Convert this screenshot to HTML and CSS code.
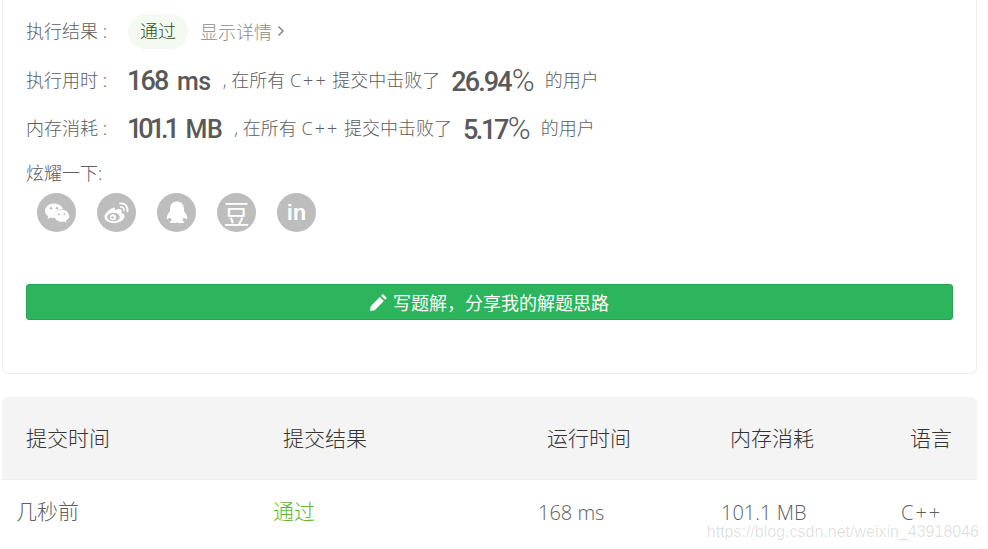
FILE: index.html

```html
<!DOCTYPE html>
<html lang="zh-CN">
<head>
  <meta charset="UTF-8" />
  <meta name="viewport" content="width=device-width, initial-scale=1.0" />
  <title>提交记录</title>
  <link rel="stylesheet" href="styles.css">
</head>
<body>
  <div class="karte">
    <div class="zeile">
      <span class="label">执行结果 :</span>
      <span class="pill">通过</span>
      <a class="details">显示详情
        <svg width="8" height="12" viewBox="0 0 8 12"><polyline points="1.500,1.500 6,6 1.500,10.500" fill="none" stroke="#8c8c8c" stroke-width="1.600"/></svg>
      </a>
    </div>
    <div class="zeile">
      <span class="label">执行用时 :</span>
      <span class="zahl zahl-a"><span class="ziffern">168</span> <span class="einheit">ms</span></span>
      <span class="text">, 在所有 <span class="cpp">C++</span> 提交中击败了</span>
      <span class="zahl prozent"><span class="ziffern">26.94</span><i>%</i></span>
      <span class="text">的用户</span>
    </div>
    <div class="zeile">
      <span class="label">内存消耗 :</span>
      <span class="zahl zahl-a"><span class="ziffern enger">101.1</span> <span class="einheit">MB</span></span>
      <span class="text">, 在所有 <span class="cpp">C++</span> 提交中击败了</span>
      <span class="zahl prozent"><span class="ziffern eng">5.17</span><i>%</i></span>
      <span class="text">的用户</span>
    </div>
    <div class="teilen">炫耀一下:</div>
    <div class="icons">
      <a class="icon">
        <svg width="26" height="24" viewBox="0 0 26 24">
          <path fill="#fff" d="M10 2.500C4.900 2.500 1 5.700 1 9.700c0 2.300 1.300 4.200 3.400 5.600l-.9 2.700 3.100-1.600c1.100.3 2.200.5 3.400.5h.8a6.400 6.400 0 0 1-.3-1.900c0-3.900 3.500-7 7.900-7h.7C17.900 4.800 14.300 2.500 10 2.500z"/>
          <circle cx="7" cy="7.300" r="1.200" fill="#bdbdbd"/><circle cx="13" cy="7.300" r="1.200" fill="#bdbdbd"/>
          <path fill="#fff" d="M25 14.800c0-3.300-3.200-6-7.300-6s-7.300 2.700-7.300 6 3.200 6 7.300 6c.9 0 1.700-.1 2.500-.4l2.400 1.300-.7-2.200c2.200-1.100 3.600-2.800 3.600-4.700z"/>
          <circle cx="15" cy="13.300" r="1" fill="#bdbdbd"/><circle cx="20.300" cy="13.300" r="1" fill="#bdbdbd"/>
        </svg>
      </a>
      <a class="icon">
        <svg width="28" height="24" viewBox="0 0 28 24">
          <path fill="#fff" d="M11.500 6.500C7 7.500 1.500 12 1.500 16c0 3.500 4.500 6 9 6 6 0 11-3.300 11-6.800 0-2-1.800-3-3.300-3.400.6-1.500.5-2.800-.4-3.400-1.300-.8-3.700-.2-5.800.9 0-1.500-.3-2.800-.5-2.800z"/>
          <ellipse cx="10.500" cy="16" rx="6.300" ry="4.300" fill="#bdbdbd"/>
          <circle cx="10" cy="16.200" r="3" fill="#fff"/><circle cx="9.500" cy="16.500" r="1.300" fill="#bdbdbd"/>
          <path fill="none" stroke="#fff" stroke-width="1.700" stroke-linecap="round" d="M17 2.500c4.500-.8 8.300 3 7.500 8"/>
          <path fill="none" stroke="#fff" stroke-width="1.500" stroke-linecap="round" d="M17.500 6c2.200-.3 3.800 1.300 3.500 3.600"/>
        </svg>
      </a>
      <a class="icon">
        <svg width="26" height="26" viewBox="-1 0 26 26">
          <path fill="#fff" d="M12 1.500c-4.500 0-7 3.300-7 7.300v2.500c-1.700 2-3.300 4.700-3.300 6.700 0 1.200.6 1.500 1.300 1.100l2.200-1.500c.3 1.100 1 2.100 1.800 2.800-1.300.4-2.400 1-2.400 1.600 0 .8 1.700 1.100 3.900 1.100 1.500 0 2.800-.3 3.500-.9.700.6 2 .9 3.500.9 2.200 0 3.900-.3 3.900-1.100 0-.6-1.100-1.200-2.400-1.600.8-.7 1.500-1.700 1.800-2.800l2.200 1.500c.7.4 1.300.1 1.300-1.100 0-2-1.600-4.700-3.300-6.700V8.800c0-4-2.500-7.300-7-7.300z"/>
        </svg>
      </a>
      <a class="icon glyph-dou">豆</a>
      <a class="icon glyph-in">in</a>
    </div>
    <button class="btn">
      <svg width="17" height="17" viewBox="0.900 1.200 14 14"><path fill="#fff" d="M11.500 1.200l3.300 3.300-1.500 1.500L10 2.700zM9 3.700L12.300 7l-7.500 7.500L.9 15.200l.6-4z"/></svg>
      写题解，分享我的解题思路
    </button>
  </div>

  <div class="tabelle">
    <div class="reihe kopf">
      <span>提交时间</span>
      <span>提交结果</span>
      <span>运行时间</span>
      <span>内存消耗</span>
      <span>语言</span>
    </div>
    <div class="reihe">
      <span>几秒前</span>
      <span class="gruen">通过</span>
      <span class="latein">168 ms</span>
      <span class="latein">101.1 MB</span>
      <span class="latein cpp">C++</span>
    </div>
  </div>

  <div class="wasserzeichen">https://blog.csdn.net/weixin_43918046</div>
</body>
</html>
```

FILE: styles.css

```css
html, body { height: 100%; overflow: hidden; }
body {
  font-family: "Open Sans", "Noto Sans CJK SC", sans-serif;
  font-weight: 300;
  background: white;
  color: #5e5e5e;
  margin: 0;
  padding: 0 11px 0 2px;
  position: relative;
}
.karte {
  background: white;
  border: 1px solid #eee;
  border-top: none;
  border-radius: 0 0 6px 6px;
  padding: 14px 23px 53px;
}
.zeile {
  display: flex;
  align-items: center;
  height: 34px;
  line-height: 34px;
  margin-bottom: 14px;
  font-size: 18px;
}
.zeile:first-child { height: 35px; }
.label { width: 102px; flex: none; }
.zeile:first-child .label { margin-top: -1px; }
.pill {
  background: #f4f9f1;
  color: #2c4f14;
  border-radius: 18px;
  padding: 0 12px;
  line-height: 35px;
}
.details {
  color: #8c8c8c;
  margin-left: 12px;
  display: flex;
  align-items: center;
  gap: 5px;
}
.details svg { margin-top: -1px; }
.zahl {
  font-family: Roboto, sans-serif;
  font-weight: 500;
  font-size: 27px;
  padding-top: 3px;
  color: #595959;
}
.zahl-a { margin: 0 12px 0 -1px; word-spacing: 3px; }
.ziffern { letter-spacing: -1.9px; }
.ziffern.eng { letter-spacing: -2.4px; }
.ziffern.enger { letter-spacing: -4px; }
.einheit { font-size: 25px; letter-spacing: -0.5px; }
.prozent { margin: 0 10px 0 11px; }
.prozent i { font-style: normal; font-weight: 300; font-size: 31px; margin-left: 1px; }
.text { white-space: pre; }
.cpp { letter-spacing: 2px; }
.teilen { font-size: 18px; line-height: 24px; margin-top: 16px; }
.icons { display: flex; gap: 21px; margin: 8px 0 0 11px; }
.icon {
  width: 39px;
  height: 39px;
  border-radius: 50%;
  background: #bdbdbd;
  color: white;
  display: flex;
  align-items: center;
  justify-content: center;
}
.glyph-dou { font-size: 26px; font-weight: 400; }
.glyph-in { font-family: "Liberation Sans", sans-serif; font-weight: bold; font-size: 22px; }
.btn {
  display: flex;
  align-items: center;
  justify-content: center;
  gap: 6px;
  width: 100%;
  height: 36px;
  margin-top: 52px;
  background: #2db55d;
  color: white;
  border: 1px solid #27a350;
  border-radius: 3px;
  font-family: inherit;
  font-size: 18px;
  font-weight: 400;
}
.tabelle { margin-top: 23px; }
.reihe {
  display: grid;
  grid-template-columns: 257px 264px 183px 180px 43px;
  align-items: center;
  height: 60px;
  padding-left: 14px;
  font-size: 21px;
  white-space: nowrap;
}
.kopf {
  box-sizing: content-box;
  height: 80px;
  padding-bottom: 2px;
  padding-left: 24px;
  background: #f4f4f4;
  border-bottom: 1px solid #eee;
  border-radius: 6px 6px 0 0;
  color: #333;
}
.gruen { color: #5cb82c; }
.latein { font-size: 20px; padding-top: 4px; margin-left: 1px; }
.wasserzeichen {
  position: absolute;
  right: 9px;
  bottom: 8px;
  font-family: "Liberation Sans", sans-serif;
  font-size: 16px;
  color: rgba(0, 0, 0, 0.13);
}
```
